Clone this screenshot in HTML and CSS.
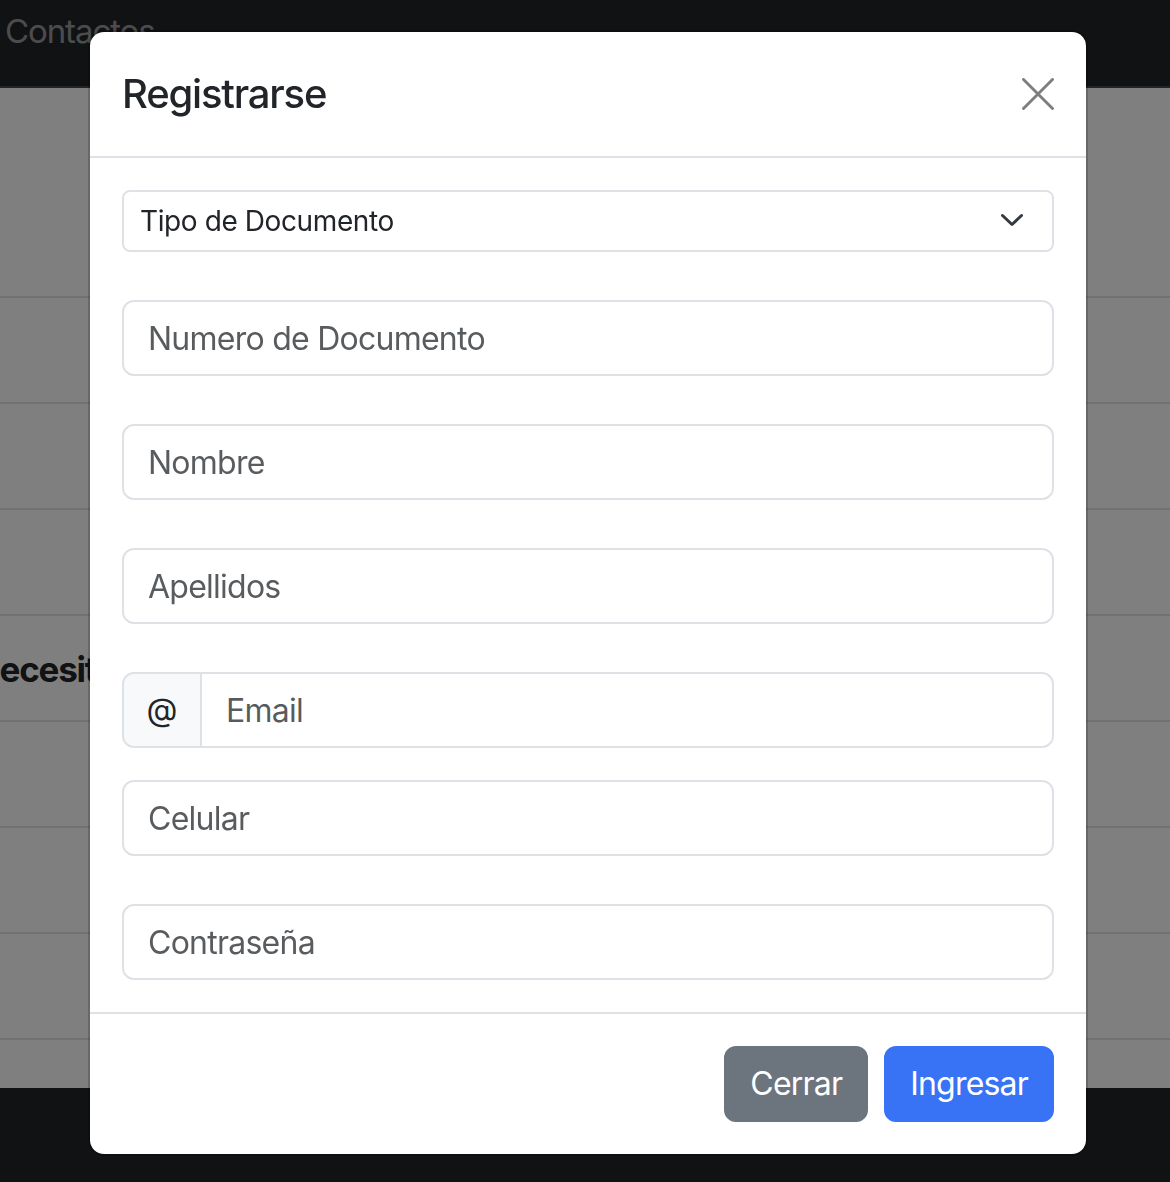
FILE: index.html
```html
<!DOCTYPE html>
<html lang="es">
<head>
<meta charset="utf-8">
<title>Registrarse</title>
<link rel="stylesheet" href="styles.css">
</head>
<body>
<header class="navbar">
  <a class="nav-link">Contactos</a>
</header>
<main class="page">
  <div class="row row-hero"></div>
  <div class="row"></div>
  <div class="row"></div>
  <div class="row"></div>
  <div class="row"><span class="row-title">Necesitas ayuda?</span></div>
  <div class="row"></div>
  <div class="row"></div>
  <div class="row"></div>
  <div class="row row-last"></div>
</main>
<footer class="site-footer"></footer>

<div class="backdrop"></div>
<div class="modal">
  <div class="modal-dialog">
    <div class="modal-content">
      <div class="modal-header">
        <h5 class="modal-title">Registrarse</h5>
        <button class="btn-close" type="button" aria-label="Close">
          <svg viewBox="0 0 32 32" width="32" height="32"><path d="M1.5 1.5L30.5 30.5M30.5 1.5L1.5 30.5" fill="none" stroke="#000" stroke-width="2.9" stroke-linecap="round"/></svg>
        </button>
      </div>
      <div class="modal-body">
        <div class="select-wrap">
          <select class="form-select"><option>Tipo de Documento</option></select>
          <svg class="chevron" viewBox="0 0 24 14" width="24" height="14"><path d="M2.5 2.5L12 11.5L21.5 2.5" fill="none" stroke="#343a40" stroke-width="3" stroke-linecap="round" stroke-linejoin="round"/></svg>
        </div>
        <input class="form-control" type="text" placeholder="Numero de Documento">
        <input class="form-control" type="text" placeholder="Nombre">
        <input class="form-control" type="text" placeholder="Apellidos">
        <div class="input-group">
          <span class="input-group-text">@</span>
          <input class="form-control" type="email" placeholder="Email">
        </div>
        <input class="form-control" type="text" placeholder="Celular">
        <input class="form-control" type="password" placeholder="Contraseña">
      </div>
      <div class="modal-footer">
        <button class="btn btn-secondary" type="button">Cerrar</button>
        <button class="btn btn-primary" type="button">Ingresar</button>
      </div>
    </div>
  </div>
</div>
</body>
</html>
```

FILE: styles.css
```css
* { box-sizing: border-box; }

html, body {
  margin: 0;
  padding: 0;
}

body {
  font-family: Inter, "Noto Sans", "Liberation Sans", sans-serif;
  color: #212529;
  background: #fff;
  overflow: hidden;
}

/* underlying page */
.navbar {
  height: 88px;
  background: #212529;
  border-bottom: 2px solid #45494d;
  display: flex;
  align-items: flex-start;
  padding: 7px 0 0 5px;
}

.nav-link {
  font-size: 33px;
  line-height: 48px;
  letter-spacing: -1.1px;
  color: rgba(255, 255, 255, 0.55);
}

.page {
  display: flex;
  flex-direction: column;
  background: #fff;
}

.row {
  height: 106px;
  border-bottom: 2px solid #dee2e6;
  display: flex;
  align-items: center;
  overflow: hidden;
}

.row-hero { height: 210px; }

.row-last {
  height: 48px;
  border-bottom: none;
}

.row-title {
  font-size: 35px;
  font-weight: 700;
  letter-spacing: -1.2px;
  color: #212529;
  white-space: nowrap;
  text-indent: -26px;
  display: block;
  padding-top: 2px;
}

.site-footer {
  height: 120px;
  background: #212529;
}

/* overlay */
.backdrop {
  position: fixed;
  inset: 0;
  background: rgba(0, 0, 0, 0.5);
}

.modal {
  position: fixed;
  inset: 0;
}

.modal-dialog {
  width: 1000px;
  margin: 30px 0 0 88px;
}

.modal-content {
  background: #fff;
  border: 2px solid rgba(0, 0, 0, 0.175);
  border-radius: 16px;
  background-clip: padding-box;
  display: flex;
  flex-direction: column;
}

.modal-header {
  display: flex;
  align-items: center;
  padding: 32px;
  border-bottom: 2px solid #dee2e6;
}

.modal-title {
  margin: 0;
  font-size: 40px;
  line-height: 60px;
  font-weight: 500;
  color: #212529;
  letter-spacing: -1.2px;
}

.btn-close {
  margin: -8px -8px -8px auto;
  padding: 8px;
  width: 48px;
  height: 48px;
  border: 0;
  background: transparent;
  opacity: 0.5;
  display: flex;
}

.btn-close svg { display: block; }

.modal-body {
  padding: 32px;
  display: flex;
  flex-direction: column;
}

.select-wrap {
  position: relative;
  margin-bottom: 48px;
}

.form-select {
  display: block;
  width: 100%;
  height: 62px;
  padding: 8px 64px 8px 16px;
  font-family: inherit;
  font-size: 28px;
  line-height: 42px;
  letter-spacing: -0.4px;
  color: #212529;
  background: #fff;
  border: 2px solid #dee2e6;
  border-radius: 8px;
  appearance: none;
  -webkit-appearance: none;
}

.chevron {
  position: absolute;
  right: 30px;
  top: 23px;
  pointer-events: none;
}

.form-control {
  display: block;
  width: 100%;
  height: 76px;
  padding: 12px 24px;
  font-family: inherit;
  font-size: 32px;
  line-height: 48px;
  letter-spacing: -0.75px;
  color: #212529;
  background: #fff;
  border: 2px solid #dee2e6;
  border-radius: 12px;
  margin: 0 0 48px;
  outline: none;
}

.modal-body > .form-control:last-child { margin-bottom: 0; }

.form-control::placeholder {
  color: rgba(33, 37, 41, 0.75);
  opacity: 1;
}

.input-group {
  display: flex;
  margin-bottom: 32px;
}

.input-group-text {
  display: flex;
  align-items: center;
  justify-content: center;
  width: 80px;
  height: 76px;
  font-size: 32px;
  line-height: 48px;
  color: #212529;
  background: #f8f9fa;
  border: 2px solid #dee2e6;
  border-radius: 12px 0 0 12px;
}

.input-group .form-control {
  flex: 1;
  margin: 0 0 0 -2px;
  border-radius: 0 12px 12px 0;
}

.modal-footer {
  display: flex;
  justify-content: flex-end;
  align-items: center;
  padding: 24px;
  border-top: 2px solid #dee2e6;
  gap: 16px;
}

.btn {
  margin: 8px;
  padding: 12px 24px;
  font-family: inherit;
  font-size: 32px;
  line-height: 48px;
  font-weight: 400;
  letter-spacing: -0.8px;
  color: #fff;
  border: 2px solid transparent;
  border-radius: 12px;
}

.btn + .btn { margin-left: -8px; }

.btn-secondary {
  background: #6c757d;
  border-color: #6c757d;
}

.btn-primary {
  background: #3872f5;
  border-color: #3872f5;
}
```
